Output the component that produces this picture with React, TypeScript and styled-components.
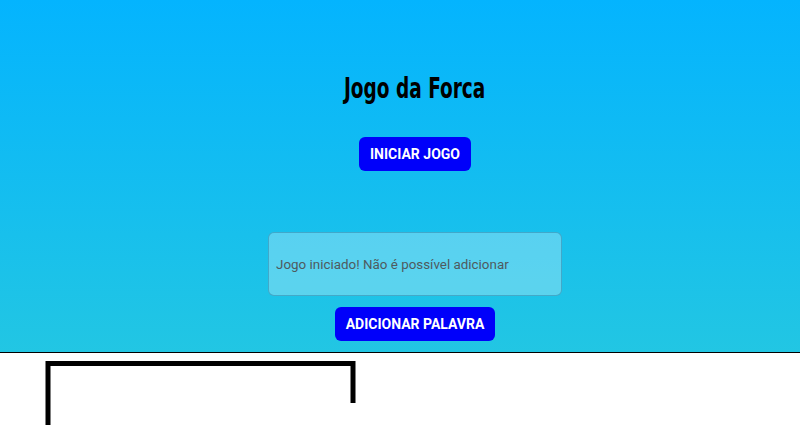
import React from "react";
import styled, { createGlobalStyle } from "styled-components";

const Global = createGlobalStyle`
  html, body { margin: 0; padding: 0; background: #fff; }
  body { font-family: Roboto, "Liberation Sans", sans-serif; }
`;

const Header = styled.header`
  box-sizing: border-box;
  height: 353px;
  border-bottom: 1px solid #000;
  background: linear-gradient(180deg, #04b4fe 0%, #22c6e3 100%);
  display: flex;
  flex-direction: column;
  align-items: center;
  padding: 68px 0 0 30px;
`;

const Title = styled.h1`
  margin: 0;
  height: 40px;
  line-height: 40px;
  font-family: "DejaVu Sans Condensed", "Liberation Sans Narrow", sans-serif;
  font-weight: 700;
  font-size: 29px;
  color: #000;
  transform: scaleX(0.71);
`;

const Button = styled.button<{ $mt: number }>`
  margin-top: ${(p) => p.$mt}px;
  height: 34px;
  padding: 0 11px;
  border: none;
  border-radius: 6px;
  background: #0000fa;
  color: #fff;
  font-family: Roboto, "Liberation Sans", sans-serif;
  font-weight: 700;
  font-size: 14px;
  cursor: pointer;
`;

const Input = styled.input`
  margin-top: 61px;
  width: 294px;
  height: 64px;
  box-sizing: border-box;
  padding: 0 7px;
  border: 1px solid rgba(50, 140, 175, 0.6);
  border-radius: 6px;
  background: rgba(255, 255, 255, 0.28);
  font-family: Roboto, "Liberation Sans", sans-serif;
  font-size: 13.4px;
  color: #333;
  &::placeholder { color: #4f5a5e; }
`;

const Board = styled.div`
  height: 72px;
  background: #fff;
`;

export default function App() {
  return (
    <>
      <Global />
      <Header>
        <Title>Jogo da Forca</Title>
        <Button $mt={29}>INICIAR JOGO</Button>
        <Input disabled placeholder="Jogo iniciado! Não é possível adicionar" />
        <Button $mt={11}>ADICIONAR PALAVRA</Button>
      </Header>
      <Board>
        <svg width="800" height="72" viewBox="0 353 800 72">
          <path d="M48 425 L48 363.5 L353 363.5 L353 403" fill="none" stroke="#000" strokeWidth="5" />
        </svg>
      </Board>
    </>
  );
}
